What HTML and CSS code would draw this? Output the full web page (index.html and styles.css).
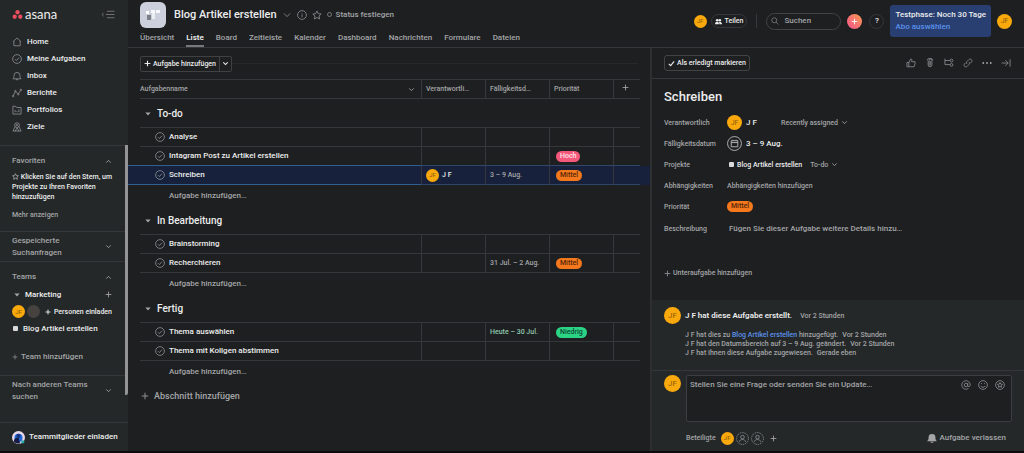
FILE: index.html
```html
<!DOCTYPE html>
<html lang="de">
<head>
<meta charset="utf-8">
<meta name="viewport" content="width=device-width, initial-scale=1">
<title>Blog Artikel erstellen – Asana</title>
<link rel="stylesheet" href="styles.css">
</head>
<body>
<svg class="sprite" aria-hidden="true">
  <symbol id="check" viewBox="0 0 16 16"><circle cx="8" cy="8" r="7"/><path d="M4.800 8.300l2.200 2.200 4.200-4.600"/></symbol>
  <symbol id="down" viewBox="0 0 16 16"><path d="M3 5.500l5 5 5-5"/></symbol>
  <symbol id="up" viewBox="0 0 16 16"><path d="M3 10.500l5-5 5 5"/></symbol>
  <symbol id="plus" viewBox="0 0 16 16"><path d="M8 1.500v13M1.500 8h13"/></symbol>
  <symbol id="caret" viewBox="0 0 16 16"><path d="M1 4h14l-7 8z"/></symbol>
  <symbol id="star" viewBox="0 0 16 16"><path d="M8 1.500l2 4.400 4.700.5-3.500 3.200 1 4.800L8 12l-4.200 2.400 1-4.800L1.300 6.400 6 5.900z"/></symbol>
  <symbol id="person" viewBox="0 0 16 16"><circle class="dash" cx="8" cy="8" r="7.300"/><circle cx="8" cy="6.300" r="2.200"/><path d="M4.200 12c.4-2 1.900-2.700 3.800-2.700s3.400.7 3.800 2.700"/></symbol>
</svg>
<div class="app">
  <aside class="sidebar">
    <div class="brand">
      <a class="logo" href="#" aria-label="asana">
        <svg class="logo-mark" viewBox="0 0 18 16"><circle cx="9" cy="4" r="3.800"/><circle cx="4" cy="12" r="3.800"/><circle cx="14" cy="12" r="3.800"/></svg>
        <span>asana</span>
      </a>
      <button class="icon-btn" aria-label="Seitenleiste ausblenden"><svg class="ico collapse" viewBox="0 0 26 16"><path d="M5 5L2 8l3 3M11 2h14M9 8h16M11 14h14"/></svg></button>
    </div>
    <nav class="nav">
      <a href="#"><svg class="ico" viewBox="0 0 16 16"><path d="M1.500 7.500L8 1.500l6.500 6M3 6.500V14h10V6.500"/></svg>Home</a>
      <a href="#"><svg class="ico"><use href="#check"/></svg>Meine Aufgaben</a>
      <a href="#"><svg class="ico" viewBox="0 0 16 16"><path d="M1.500 12.500h13c-1.500-1.500-1.800-2.500-1.800-5.500a4.700 4.700 0 0 0-9.400 0c0 3-.3 4-1.800 5.500zM6.500 12.800c.3 2.200 2.700 2.200 3 0"/></svg>Inbox</a>
      <a href="#"><svg class="ico" viewBox="0 0 16 16"><circle cx="1.800" cy="13" r="1.200"/><circle cx="5.500" cy="5" r="1.200"/><circle cx="10" cy="10" r="1.200"/><circle cx="14.200" cy="3" r="1.200"/><path d="M2.300 12L5 6M6.300 6l3 3.200M10.500 9l3.200-5"/></svg>Berichte</a>
      <a href="#"><svg class="ico" viewBox="0 0 16 16"><path d="M1.500 2h4.500l1.500 2h7v10.500h-13zM5 8v3.500M8 9.500v2M11 7v4.500"/></svg>Portfolios</a>
      <a href="#"><svg class="ico" viewBox="0 0 16 16"><circle cx="8" cy="5" r="3.800"/><circle cx="8" cy="5" r="1.200"/><path d="M4.800 7.500L1.500 14.500h13L11.200 7.500M5 14.500l3-5 3 5"/></svg>Ziele</a>
    </nav>
    <div class="side-scroll">
      <section class="side-block favorites">
        <button class="side-head"><span>Favoriten</span><svg class="ico mini"><use href="#up"/></svg></button>
        <p><svg class="ico mini"><use href="#star"/></svg> Klicken Sie auf den Stern, um Projekte zu Ihren Favoriten hinzuzufügen</p>
        <a class="more" href="#">Mehr anzeigen</a>
      </section>
      <section class="side-block">
        <button class="side-head two-line"><span>Gespeicherte Suchanfragen</span><svg class="ico mini"><use href="#down"/></svg></button>
      </section>
      <section class="side-block teams">
        <button class="side-head"><span>Teams</span><svg class="ico mini"><use href="#up"/></svg></button>
        <div class="team-row"><button class="team"><svg class="fill caret"><use href="#caret"/></svg>Marketing</button><button class="icon-btn" aria-label="Hinzufügen"><svg class="ico mini"><use href="#plus"/></svg></button></div>
        <div class="people-row"><span class="avatar">JF</span><span class="avatar empty"></span><button class="invite"><svg class="ico bold"><use href="#plus"/></svg>Personen einladen</button></div>
        <a class="project" href="#"><i class="dot"></i>Blog Artikel erstellen</a>
        <button class="add-team"><svg class="ico"><use href="#plus"/></svg>Team hinzufügen</button>
      </section>
      <section class="side-block last">
        <button class="side-head two-line"><span>Nach anderen Teams suchen</span><svg class="ico mini"><use href="#down"/></svg></button>
      </section>
    </div>
    <button class="invite-all"><svg class="badge" viewBox="0 0 16 16"><circle cx="8" cy="8" r="8" fill="#e9d9e8"/><circle cx="8" cy="8.500" r="5" fill="#2568d8"/><path d="M2 13c1-4 3-5 6-5l2 7a8 8 0 0 1-8-2z" fill="#171c46"/><circle cx="8" cy="6" r="2.600" fill="#17367f"/><circle cx="13.300" cy="13.300" r="2" fill="#25a6a0"/></svg>Teammitglieder einladen</button>
  </aside>

  <div class="main">
    <header class="topbar">
      <div class="project-area">
        <div class="project-icon"><svg viewBox="0 0 26 26"><path d="M6 9h3v3H6z" fill="#fff"/><path d="M11 8h4v3h-4zM16 8h4v3h-4z" fill="#f7f8fb"/><path d="M7 13h4v5H7z" fill="#7b8087"/><path d="M12 11h3v6h-3z" fill="#eceef3"/></svg></div>
        <div class="title-row">
          <h1>Blog Artikel erstellen</h1>
          <svg class="ico"><use href="#down"/></svg>
          <svg class="ico info" viewBox="0 0 16 16"><circle cx="8" cy="8" r="7"/><path d="M8 7v4.500M8 4.500v1"/></svg>
          <svg class="ico"><use href="#star"/></svg>
          <button class="status"><i></i>Status festlegen</button>
        </div>
        <nav class="tabs">
          <a href="#">Übersicht</a><a class="active" href="#">Liste</a><a href="#">Board</a><a href="#">Zeitleiste</a><a href="#">Kalender</a><a href="#">Dashboard</a><a href="#">Nachrichten</a><a href="#">Formulare</a><a href="#">Dateien</a>
        </nav>
      </div>
      <div class="account">
        <span class="avatar">JF</span>
        <button class="share"><svg class="fill" viewBox="0 0 16 16"><circle cx="5" cy="5" r="3"/><circle cx="11" cy="5" r="3"/><path d="M0 14c0-4 2-5 5-5s4 1 4 5zM10 14c0-2.500-.4-4-1.200-5C13 8.500 16 9.500 16 14z"/></svg>Teilen</button>
        <span class="divider"></span>
        <label class="search"><svg class="ico" viewBox="0 0 16 16"><circle cx="6.500" cy="6.500" r="5"/><path d="M10.200 10.200L15 15"/></svg><input type="text" placeholder="Suchen" aria-label="Suchen"></label>
        <button class="create" aria-label="Erstellen"><svg class="ico"><use href="#plus"/></svg></button>
        <button class="help">?</button>
        <div class="trial"><strong>Testphase: Noch 30 Tage</strong><a href="#">Abo auswählen</a></div>
        <span class="avatar big">JF</span>
      </div>
    </header>

    <div class="work">
      <main class="list">
        <div class="toolbar">
          <div class="split"><button><svg class="ico bold"><use href="#plus"/></svg>Aufgabe hinzufügen</button><button aria-label="Weitere Optionen"><svg class="ico bold"><use href="#down"/></svg></button></div>
        </div>
        <table>
          <colgroup><col class="c-start"><col><col class="c-field"><col class="c-field"><col class="c-field"><col class="c-add"><col class="c-end"></colgroup>
          <thead>
            <tr><td></td><th class="name-head"><div>Aufgabenname<svg class="ico mini"><use href="#down"/></svg></div></th><th>Verantwortli…</th><th>Fälligkeitsd…</th><th>Priorität</th><th class="add-col"><button class="icon-btn" aria-label="Spalte hinzufügen"><svg class="ico mini"><use href="#plus"/></svg></button></th><td></td></tr>
          </thead>
          <tbody>
            <tr class="section top"><td></td><th colspan="5"><button><svg class="fill caret"><use href="#caret"/></svg>To-do</button></th><td></td></tr>
            <tr class="task first"><td></td><td><div class="task-name"><svg class="ico"><use href="#check"/></svg>Analyse</div></td><td></td><td></td><td></td><td></td><td></td></tr>
            <tr class="task"><td></td><td><div class="task-name"><svg class="ico"><use href="#check"/></svg>Intagram Post zu Artikel erstellen</div></td><td></td><td></td><td><span class="pill high">Hoch</span></td><td></td><td></td></tr>
            <tr class="task selected"><td></td><td><div class="task-name"><svg class="ico"><use href="#check"/></svg>Schreiben</div></td><td><div class="assignee"><span class="avatar">JF</span>J F</div></td><td>3 – 9 Aug.</td><td><span class="pill mid">Mittel</span></td><td></td><td></td></tr>
            <tr class="add"><td></td><td colspan="5"><button>Aufgabe hinzufügen…</button></td><td></td></tr>
          </tbody>
          <tbody>
            <tr class="section"><td></td><th colspan="5"><button><svg class="fill caret"><use href="#caret"/></svg>In Bearbeitung</button></th><td></td></tr>
            <tr class="task first"><td></td><td><div class="task-name"><svg class="ico"><use href="#check"/></svg>Brainstorming</div></td><td></td><td></td><td></td><td></td><td></td></tr>
            <tr class="task"><td></td><td><div class="task-name"><svg class="ico"><use href="#check"/></svg>Recherchieren</div></td><td></td><td>31 Jul. – 2 Aug.</td><td><span class="pill mid">Mittel</span></td><td></td><td></td></tr>
            <tr class="add"><td></td><td colspan="5"><button>Aufgabe hinzufügen…</button></td><td></td></tr>
          </tbody>
          <tbody>
            <tr class="section"><td></td><th colspan="5"><button><svg class="fill caret"><use href="#caret"/></svg>Fertig</button></th><td></td></tr>
            <tr class="task first"><td></td><td><div class="task-name"><svg class="ico"><use href="#check"/></svg>Thema auswählen</div></td><td></td><td class="today">Heute – 30 Jul.</td><td><span class="pill low">Niedrig</span></td><td></td><td></td></tr>
            <tr class="task"><td></td><td><div class="task-name"><svg class="ico"><use href="#check"/></svg>Thema mit Kollgen abstimmen</div></td><td></td><td></td><td></td><td></td><td></td></tr>
            <tr class="add"><td></td><td colspan="5"><button>Aufgabe hinzufügen…</button></td><td></td></tr>
          </tbody>
        </table>
        <button class="add-section"><svg class="ico"><use href="#plus"/></svg>Abschnitt hinzufügen</button>
      </main>

      <aside class="detail">
        <div class="detail-bar">
          <button class="complete"><svg class="ico bold" viewBox="0 0 16 16"><path d="M2 9l4 4 8-10"/></svg>Als erledigt markieren</button>
          <div class="actions">
            <button class="icon-btn" aria-label="Gefällt mir"><svg class="ico" viewBox="0 0 16 16"><path d="M1.500 7h3v7h-3zM4.500 7.500L7.500 1.500c2 0 2.200 1.200 1.500 4.500h5.500v3l-1.500 5H4.500"/></svg></button>
            <button class="icon-btn" aria-label="Anhang"><svg class="ico" viewBox="0 0 16 16"><path d="M5 4.500V11a3 3 0 0 0 6 0V4a2.200 2.200 0 0 0-4.400 0v6.500a1.200 1.200 0 0 0 2.400 0V5M3.500 4a4.500 3.500 0 0 1 9 0"/></svg></button>
            <button class="icon-btn" aria-label="Unteraufgabe"><svg class="ico" viewBox="0 0 16 16"><path d="M1.500 1v9.500h8M1.500 4h8"/><circle cx="12" cy="4" r="2.200"/><circle cx="12" cy="11" r="2.200"/></svg></button>
            <button class="icon-btn" aria-label="Link kopieren"><svg class="ico" viewBox="0 0 16 16"><path d="M6.500 9.500c-1.500-1.500-1-3 0-4l3-3c3-2.500 6.500 1.500 4 4l-2 2M9.500 6.500c1.500 1.500 1 3 0 4l-3 3c-3 2.500-6.500-1.500-4-4l2-2"/></svg></button>
            <button class="icon-btn" aria-label="Mehr"><svg class="fill" viewBox="0 0 16 16"><circle cx="2" cy="8" r="1.500"/><circle cx="8" cy="8" r="1.500"/><circle cx="14" cy="8" r="1.500"/></svg></button>
            <button class="icon-btn" aria-label="Schließen"><svg class="ico" viewBox="0 0 16 16"><path d="M1 8h10.500M7 3.500L11.500 8 7 12.500M14.500 2v12"/></svg></button>
          </div>
        </div>
        <div class="detail-body">
          <h2>Schreiben</h2>
          <dl class="fields">
            <dt>Verantwortlich</dt><dd class="strong"><span class="avatar big">JF</span><span class="person-name">J F</span><button class="drop">Recently assigned<svg class="ico mini"><use href="#down"/></svg></button></dd>
            <dt>Fälligkeitsdatum</dt><dd class="strong"><svg class="ico calendar" viewBox="0 0 16 16"><circle cx="8" cy="8" r="7.400"/><path d="M4.500 5h7v6.500h-7zM4.500 7h7M6.300 4v1M9.700 4v1"/></svg>3 – 9 Aug.</dd>
            <dt>Projekte</dt><dd><a class="project-link" href="#"><i class="dot"></i>Blog Artikel erstellen</a><button class="drop">To-do<svg class="ico mini"><use href="#down"/></svg></button></dd>
            <dt>Abhängigkeiten</dt><dd><button>Abhängigkeiten hinzufügen</button></dd>
            <dt>Priorität</dt><dd><span class="pill mid">Mittel</span></dd>
            <dt>Beschreibung</dt><dd class="description">Fügen Sie dieser Aufgabe weitere Details hinzu…</dd>
          </dl>
          <button class="subtask"><svg class="ico"><use href="#plus"/></svg>Unteraufgabe hinzufügen</button>
        </div>
        <section class="feed">
          <div class="feed-head"><span class="avatar huge">JF</span><strong>J F hat diese Aufgabe erstellt.</strong><time>Vor 2 Stunden</time></div>
          <ul>
            <li>J F hat dies zu <a href="#">Blog Artikel erstellen</a> hinzugefügt.<time>Vor 2 Stunden</time></li>
            <li>J F hat den Datumsbereich auf 3 – 9 Aug. geändert.<time>Vor 2 Stunden</time></li>
            <li>J F hat Ihnen diese Aufgabe zugewiesen.<time>Gerade eben</time></li>
          </ul>
        </section>
        <section class="composer">
          <span class="avatar huge">JF</span>
          <div class="composer-main">
            <div class="comment-box">
              <textarea placeholder="Stellen Sie eine Frage oder senden Sie ein Update…" aria-label="Kommentar"></textarea>
              <button class="icon-btn" aria-label="Erwähnen"><svg class="ico" viewBox="0 0 16 16"><circle cx="8" cy="8" r="2.800"/><path d="M10.800 5v4c0 2.500 4 2 4-1a6.800 6.800 0 1 0-3 5.600"/></svg></button>
              <button class="icon-btn" aria-label="Emoji"><svg class="ico" viewBox="0 0 16 16"><circle cx="8" cy="8" r="7"/><path d="M4.500 9.500c1 3 6 3 7 0M5.500 5v1.500M10.500 5v1.500"/></svg></button>
              <button class="icon-btn" aria-label="Sticker"><svg class="ico" viewBox="0 0 16 16"><circle cx="8" cy="8" r="7"/><path d="M8 4l1.200 2.600 2.800.3-2.100 1.900.6 2.800L8 10.200l-2.500 1.400.6-2.800L4 6.900l2.800-.3z"/></svg></button>
            </div>
            <div class="followers">
              <span class="label">Beteiligte</span><span class="avatar">JF</span><svg class="ico ghost"><use href="#person"/></svg><svg class="ico ghost"><use href="#person"/></svg>
              <button class="icon-btn" aria-label="Beteiligte hinzufügen"><svg class="ico mini"><use href="#plus"/></svg></button>
              <button class="leave"><svg class="fill" viewBox="0 0 16 16"><path d="M0 13c2-1.500 2.500-3 2.500-6a5.500 5.500 0 0 1 11 0c0 3 .5 4.500 2.500 6zM5.500 14h5c-.5 2.500-4.500 2.500-5 0z"/></svg>Aufgabe verlassen</button>
            </div>
          </div>
        </section>
      </aside>
    </div>
  </div>
</div>
</body>
</html>
```
FILE: styles.css
```css
:root {
  --bg: #1e1f21;
  --panel: #252829;
  --line: #35373a;
  --text: #eceded;
  --muted: #a3a5a7;
  --icon: #8e9092;
  --blue: #5b91ea;
}
* { box-sizing: border-box; }
body {
  margin: 0;
  background: #0c0c0d;
  color: var(--text);
  font: 500 8px/10px Roboto, "Liberation Sans", sans-serif;
}
button, input, textarea { font: inherit; color: inherit; background: none; border: 0; padding: 0; margin: 0; }
button { display: inline-flex; align-items: center; text-align: left; white-space: nowrap; }
a { color: inherit; text-decoration: none; }
h1, h2, p, dl, dd, ul { margin: 0; padding: 0; }
ul { list-style: none; }
svg { display: block; flex: none; width: 10px; height: 10px; }
.sprite { position: absolute; width: 0; height: 0; }
.ico { fill: none; stroke: var(--icon); stroke-width: 1.3; }
.fill { fill: var(--muted); }
.mini { width: 7px; height: 7px; stroke: var(--muted); stroke-width: 2; }
.bold { width: 7px; height: 7px; stroke: var(--text); stroke-width: 2.5; }
.caret { width: 6px; height: 6px; }
.avatar {
  display: inline-flex; align-items: center; justify-content: center; flex: none;
  width: 13px; height: 13px; border-radius: 50%;
  background: #f9a90c; color: #8f5a08; font-size: 6px; font-weight: 400;
}
.avatar.big { width: 15px; height: 15px; font-size: 7px; }
.avatar.huge { width: 17px; height: 17px; font-size: 8px; }
.avatar.empty { background: #45423f; }
.dot { width: 5px; height: 5px; border-radius: 1px; background: #d9dadb; flex: none; }

.app { display: grid; grid-template-columns: 128px minmax(0, 1fr); min-height: 100vh; padding-bottom: 2px; }

/* Sidebar */
.sidebar { display: flex; flex-direction: column; background: var(--panel); }
.brand { display: flex; align-items: center; justify-content: space-between; height: 28px; padding: 0 13px 0 12px; margin-bottom: 5px; }
.logo { display: flex; align-items: center; gap: 2px; font: 400 13px/16px Lato, sans-serif; }
.logo-mark { width: 11px; height: 9px; fill: #ea4e5d; }
.collapse { width: 14px; height: 9px; }
.nav { display: flex; flex-direction: column; padding: 0 12px 10px; }
.nav a { display: flex; align-items: center; gap: 5px; height: 17px; }
.side-scroll { border-right: 3px solid #929496; border-radius: 0 0 2px 0; height: 250px; }
.side-block { border-top: 1px solid var(--line); padding: 0 13px 0 12px; }
.side-head { display: flex; justify-content: space-between; width: 100%; height: 14px; white-space: normal; color: var(--muted); }
.side-head span { max-width: 84px; }
.favorites { padding-top: 8px; height: 86px; }
.favorites p { font-size: 7px; line-height: 10px; margin: 4px -4px 8px 0; }
.favorites p svg { display: inline; vertical-align: -1px; }
.more { display: block; font-size: 7px; color: var(--muted); }
.two-line { height: 29px; line-height: 12px; }
.teams { height: 114px; padding-top: 8px; }
.team-row { display: flex; justify-content: space-between; align-items: center; height: 17px; padding-left: 2px; margin-top: 2px; }
.team { gap: 5px; }
.people-row { display: flex; align-items: center; gap: 2px; height: 17px; }
.invite { font-size: 7px; gap: 3px; margin-left: auto; }
.invite svg { width: 6px; height: 6px; }
.project { display: flex; align-items: center; gap: 5px; height: 17px; padding-left: 1px; }
.add-team { height: 17px; margin-top: 11px; gap: 3px; color: var(--muted); }
.add-team svg { width: 6px; height: 6px; stroke-width: 2; }
.invite-all { gap: 4px; height: 29px; padding-left: 12px; margin-top: auto; border-top: 1px solid var(--line); }
.badge { width: 13px; height: 13px; }

/* Header */
.main { display: flex; flex-direction: column; min-width: 0; background: var(--bg); }
.topbar { display: flex; justify-content: space-between; height: 48px; border-bottom: 1px solid var(--line); padding: 0 12px; }
.project-area { display: grid; grid-template-columns: 26px auto; grid-template-rows: 29px 18px; column-gap: 8px; }
.project-icon { align-self: center; height: 26px; border-radius: 6px; background: #ccd0dc; }
.project-icon svg { width: 26px; height: 26px; }
.title-row { display: flex; align-items: center; gap: 5px; }
h1 { font-size: 11px; line-height: 14px; font-weight: 500; white-space: nowrap; }
.status { gap: 4px; color: var(--muted); }
.status i { width: 5px; height: 5px; border: 1px solid #77797b; border-radius: 50%; }
.tabs { grid-column: 1 / -1; display: flex; gap: 12px; color: var(--muted); }
.tabs a { line-height: 18px; height: 18px; }
.tabs .active { color: var(--text); font-weight: 600; border-bottom: 2px solid #77797b; }
.account { display: flex; align-items: center; height: 42px; }
.share { gap: 3px; height: 14px; padding: 0 3px; margin: 0 9px 0 4px; border: 1px solid var(--line); border-radius: 7px; font-size: 7px; }
.share svg { width: 7px; height: 7px; fill: var(--text); }
.divider { width: 1px; height: 14px; background: var(--line); margin-right: 9px; }
.search { display: flex; align-items: center; gap: 5px; width: 75px; height: 17px; padding: 0 4px; border: 1px solid #414345; border-radius: 9px; }
.search svg { width: 8px; height: 8px; }
.search input { min-width: 0; width: 50px; outline: 0; }
::placeholder { color: var(--muted); opacity: 1; }
.create { justify-content: center; width: 15px; height: 15px; margin: 0 7px 0 6px; border-radius: 50%; background: linear-gradient(45deg, #f5538c, #f79a51); }
.create svg { width: 7px; height: 7px; stroke: #fff; stroke-width: 2; }
.help { justify-content: center; width: 15px; height: 15px; border: 1px solid var(--line); border-radius: 50%; margin-right: 6px; }
.trial { display: flex; flex-direction: column; justify-content: center; gap: 2px; height: 32px; padding: 0 5px; border-radius: 3px; background: #293f72; margin-right: 6px; }
.trial strong { font-weight: 500; }
.trial a { color: var(--blue); }

/* Task list */
.work { flex: 1; display: grid; grid-template-columns: minmax(0, 522fr) minmax(0, 374fr); }
.toolbar { display: flex; align-items: center; height: 31px; padding: 0 12px; }
.toolbar::after { content: ""; flex: 1; height: 1px; background: #26282a; }
.split { display: flex; height: 16px; border: 1px solid #3f4143; border-radius: 2px; font-size: 7px; }
.split button { gap: 2px; padding: 0 3px; }
.split button + button { padding: 0 2px; border-left: 1px solid #3f4143; }
table { width: 100%; table-layout: fixed; border-collapse: separate; border-spacing: 0; }
.c-start { width: 12px; }
.c-end { width: 10px; }
.c-field { width: 64px; }
.c-add { width: 27px; }
th, td { padding: 0; font-weight: 500; text-align: left; white-space: nowrap; }
thead th { height: 20px; border: solid var(--line); border-width: 1px 0 1px 1px; padding-left: 4px; font-size: 7px; color: var(--muted); }
thead .name-head { border-left: 0; padding: 0 6px 0 0; }
.name-head div { display: flex; justify-content: space-between; align-items: center; }
.add-col .icon-btn { margin-left: 4px; }
.section th { height: 27px; padding: 1px 0 0 5px; }
.section.top th { height: 28px; padding-top: 2px; }
.section button { gap: 6px; font-size: 10px; font-weight: 500; }
.task td { height: 19px; border-bottom: 1px solid var(--line); border-left: 1px solid var(--line); padding-left: 4px; font-size: 7px; color: var(--muted); }
.task.first td { height: 20px; border-top: 1px solid var(--line); }
.task td:first-child, .task td:last-child { border-color: transparent; border-left: 0; }
.task td:nth-child(2) { border-left: 0; padding-left: 15px; }
.task-name { display: flex; align-items: center; gap: 4px; color: var(--text); font-size: 8px; }
.task.selected td { background: #17213b; border-bottom-color: #2f4668; box-shadow: 0 -1px #2f4668; }
.task.selected td:last-child { border-bottom-color: #17213b; box-shadow: none; }
.task.selected td:nth-child(-n+2) { box-shadow: 0 -1px #2f6190; border-bottom-color: #2f6190; }
.assignee { display: flex; align-items: center; gap: 3px; color: var(--text); }
.task td.today { color: #8fc7ae; }
.pill { display: inline-block; height: 11px; border-radius: 6px; padding: 0 4px; font-size: 7px; line-height: 11px; margin-left: 2px; vertical-align: middle; }
.high { background: #f4587a; color: #ffe6ec; }
.mid { background: #f5791c; color: #58270a; }
.low { background: #2bd385; color: #0d4a35; }
.add td { height: 22px; padding-left: 29px; color: var(--muted); }
.add td:first-child, .add td:last-child { padding: 0; }
.add-section { height: 26px; padding-left: 13px; gap: 5px; font-size: 9px; color: var(--muted); }
.add-section svg { width: 8px; height: 8px; stroke-width: 2; }

/* Task details */
.detail { display: flex; flex-direction: column; border-left: 2px solid #2d2f31; min-width: 0; }
.detail-bar { display: flex; align-items: center; justify-content: space-between; height: 31px; padding: 0 13px 0 12px; border-bottom: 1px solid var(--line); }
.complete { gap: 2px; height: 16px; padding: 0 3px; border: 1px solid #414345; border-radius: 3px; font-size: 7px; }
.actions { display: flex; gap: 9px; }
.detail-body { flex: 1; padding: 9px 12px 18px; }
h2 { font-size: 13px; line-height: 18px; font-weight: 500; margin-bottom: 6px; }
.fields { display: grid; grid-template-columns: 63px 1fr; grid-auto-rows: minmax(21px, auto); align-items: center; color: var(--muted); }
.fields dt { font-size: 7px; }
.fields dd { display: flex; align-items: center; min-width: 0; font-size: 7px; }
.fields .strong { gap: 4px; font-size: 8px; color: var(--text); }
.fields .pill { margin: 0; }
.person-name { width: 31px; }
.drop { gap: 3px; font-size: 7px; color: var(--muted); }
.calendar { width: 15px; height: 15px; stroke-width: 1; stroke: #b7b9ba; }
.project-link { display: flex; align-items: center; gap: 3px; padding-left: 2px; margin-right: 8px; color: var(--text); }
.fields .description { height: 24px; padding-left: 2px; font-size: 8px; }
.subtask { height: 16px; margin-top: 24px; gap: 2px; font-size: 7px; color: var(--muted); }
.subtask svg { width: 7px; height: 7px; stroke-width: 2; }
.feed { background: var(--panel); padding: 7px 12px 12px; border-bottom: 1px solid var(--line); }
.feed-head { display: flex; align-items: center; gap: 4px; }
.feed-head strong { font-weight: 600; }
.feed time { margin-left: 4px; color: var(--muted); font-size: 7px; }
.feed ul { padding: 7px 0 0 21px; font-size: 7px; line-height: 9px; color: var(--muted); }
.feed ul a { color: var(--blue); }
.composer { display: flex; gap: 5px; padding: 4px 12px 0; background: var(--panel); }
.composer-main { flex: 1; min-width: 0; }
.comment-box { display: flex; gap: 7px; height: 47px; padding: 4px 6px 4px 3px; border: 1px solid #3b3d40; border-radius: 2px; background: var(--bg); }
.comment-box textarea { flex: 1; resize: none; outline: 0; height: 34px; padding: 0; }
.comment-box .icon-btn { height: 10px; }
.followers { display: flex; align-items: center; gap: 2px; height: 29px; padding-top: 3px; }
.followers .label { color: var(--muted); font-size: 7px; margin-right: 3px; }
.ghost { width: 13px; height: 13px; stroke-width: 1; }
.dash { stroke-dasharray: 2 1; }
.followers .icon-btn { margin-left: 4px; }
.leave { margin-left: auto; margin-right: 6px; gap: 3px; color: var(--muted); }
```
